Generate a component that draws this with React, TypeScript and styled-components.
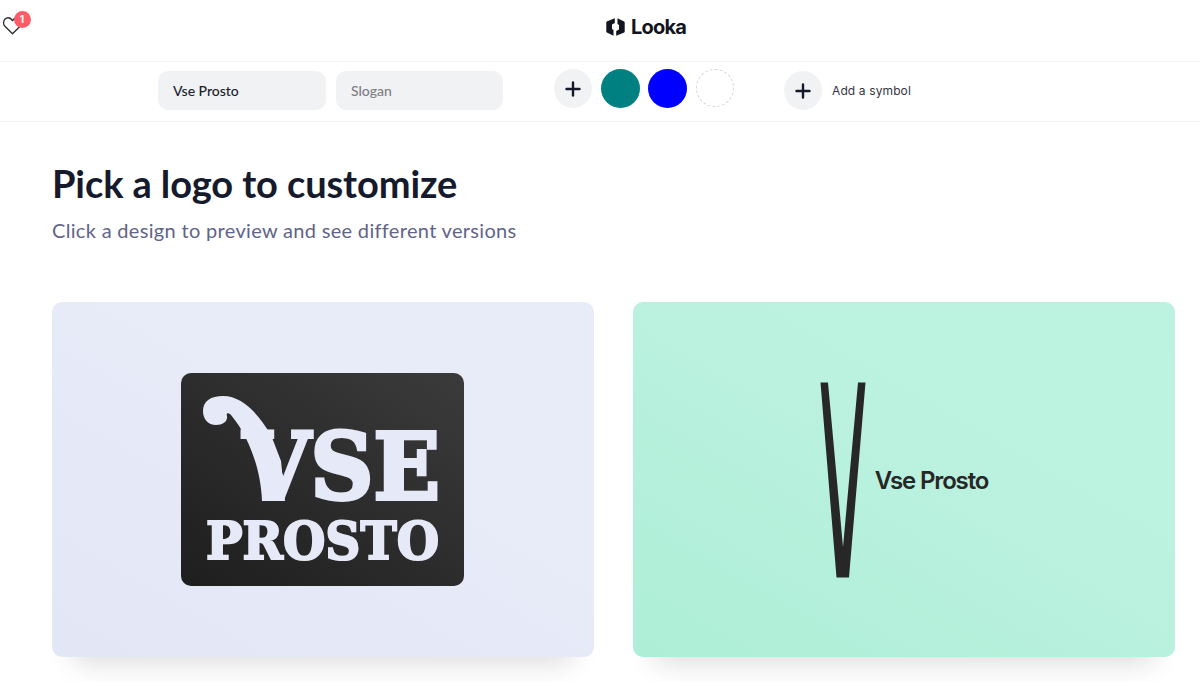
import React from "react";
import styled, { createGlobalStyle } from "styled-components";

const Global = createGlobalStyle`
  html, body { margin: 0; padding: 0; background: #fff; height: 682px; overflow: hidden; }
  * { box-sizing: border-box; }
`;

const Page = styled.div`
  width: 1200px;
  height: 682px;
  overflow: hidden;
  font-family: "Lato", "Liberation Sans", sans-serif;
  color: #151a2c;
`;

const Header = styled.header`
  height: 62px;
  display: flex;
  align-items: flex-start;
  border-bottom: 1px solid #f4f4f6;
  padding-left: 3px;
`;

const HeartWrap = styled.div`
  position: relative;
  width: 19px;
  height: 18px;
  margin-top: 17px;
  color: #2a2a30;
`;

const Badge = styled.span`
  position: absolute;
  left: 10.5px;
  top: -6.5px;
  width: 17px;
  height: 17px;
  border-radius: 50%;
  background: #ff5c67;
  color: #fff;
  font: 700 10px/17px "Inter", sans-serif;
  text-align: center;
`;

const Brand = styled.div`
  display: flex;
  align-items: center;
  gap: 6px;
  margin-left: 584px;
  margin-top: 16px;
  height: 22px;
`;

const BrandName = styled.span`
  font: 700 20px/22px "Inter", sans-serif;
  letter-spacing: -0.8px;
  color: #12141f;
`;

const Toolbar = styled.div`
  height: 60px;
  display: flex;
  align-items: flex-start;
  padding: 9px 0 0 158px;
  border-bottom: 1px solid #f4f4f6;
`;

const TextField = styled.input<{ $width: number }>`
  width: ${(p) => p.$width}px;
  height: 39px;
  border: 0;
  border-radius: 10px;
  background: #f1f2f4;
  padding: 0 15px;
  margin-right: 10px;
  font: 500 14px "Lato", sans-serif;
  color: #1b1e2e;
  outline: none;
  &::placeholder { color: #7c7e84; opacity: 1; }
`;

const Swatches = styled.div`
  display: flex;
  gap: 8.5px;
  margin: -2px 0 0 41px;
`;

const RoundButton = styled.button`
  width: 38px;
  height: 39px;
  border-radius: 50%;
  border: 0;
  padding: 0;
  background: #f1f2f4;
  display: flex;
  align-items: center;
  justify-content: center;
  color: #15182a;
`;

const Swatch = styled.div<{ $color: string }>`
  width: 39px;
  height: 39px;
  border-radius: 50%;
  background: ${(p) => p.$color};
`;

const EmptySwatch = styled.div`
  width: 38px;
  height: 38px;
  border-radius: 50%;
  border: 1px dashed #d4d4d6;
`;

const SymbolGroup = styled.div`
  display: flex;
  align-items: center;
  gap: 10px;
  margin-left: 50.5px;
`;

const SymbolLabel = styled.span`
  font: 400 12px "Inter", sans-serif;
  letter-spacing: 0.12px;
  color: #33353f;
`;

const Main = styled.main`
  padding: 38px 25px 0 52px;
`;

const Title = styled.h1`
  margin: 0;
  font: 700 38px/46px "Lato", sans-serif;
  letter-spacing: -0.1px;
  color: #151a2c;
`;

const Subtitle = styled.p`
  margin: 11px 0 0;
  font: 400 20px/26px "Lato", sans-serif;
  letter-spacing: 0.32px;
  color: #5f6488;
`;

const Cards = styled.div`
  display: grid;
  grid-template-columns: 542px 542px;
  column-gap: 39px;
  margin-top: 59px;
`;

const Card = styled.div<{ $from: string; $to: string }>`
  position: relative;
  height: 355px;
  border-radius: 10px;
  background: linear-gradient(30deg, ${(p) => p.$from}, ${(p) => p.$to} 65%);
  box-shadow: 0 28px 26px -22px rgba(0, 0, 0, 0.14);
  display: flex;
  align-items: center;
  justify-content: center;
`;

const DarkPlate = styled.div`
  width: 283px;
  height: 213px;
  margin-right: 1px;
  border-radius: 10px;
  background: linear-gradient(35deg, #1e1e1e, #3b3b3b);
`;

const LockupRow = styled.div`
  display: flex;
  align-items: center;
  gap: 9px;
`;

const LockupName = styled.span`
  font: 600 24px "Inter", sans-serif;
  letter-spacing: -1.15px;
  color: #272727;
  margin-top: 2px;
`;

const Heart = () => (
  <svg width="19" height="18" viewBox="0 0 19 18" fill="none" stroke="currentColor" strokeWidth="1.3" strokeLinejoin="round">
    <path d="M9.5 16.8 1.9 9.3C-.3 7.1.2 2.4 3.4 1.1 5.8.2 8.1 1.4 9.5 3.6 10.9 1.4 13.2.2 15.6 1.1 18.8 2.4 19.3 7.1 17.1 9.3L9.5 16.8Z" />
  </svg>
);

const LookaMark = () => (
  <svg width="19" height="18" viewBox="0 0 19 18" fill="#12141f">
    <path d="M8.8.2 1.4 3.2C.6 3.5.3 4 .3 4.8v8.4c0 .8.3 1.3 1.1 1.6l6.1 3V12L6 11V6.5L8.8 5V.2Z" />
    <path d="M10.2 17.8l7.4-3c.8-.3 1.1-.8 1.1-1.6V4.8c0-.8-.3-1.3-1.1-1.6l-6.1-3V6l1.5 1v4.5L10.2 13v4.8Z" />
  </svg>
);

const Plus = () => (
  <svg width="16" height="16" viewBox="0 0 16 16" stroke="currentColor" strokeWidth="2.4" strokeLinecap="round">
    <path d="M8 1.5v13M1.5 8h13" />
  </svg>
);

const PLATE_TEXT = "#e6eaf8";

const PlateArt = () => (
  <svg width="283" height="213" viewBox="0 0 283 213" fontFamily="'DejaVu Serif', serif" fontWeight="700" fill={PLATE_TEXT} stroke={PLATE_TEXT}>
    <text x="62" y="126" fontSize="92" strokeWidth="4" textLength="197" lengthAdjust="spacingAndGlyphs">VSE</text>
    <text x="25" y="186" fontSize="53" strokeWidth="2.2" textLength="233" lengthAdjust="spacingAndGlyphs">PROSTO</text>
    <path
      strokeWidth="0"
      d="M22 38C22 28 30 23 42 23 62 23 78 42 90 62L100 88 104 128H81C80 100 70 66 50 42 47 39 45 40 46 43 47 48 42 52 35 52 27 52 22 46 22 38Z"
    />
  </svg>
);

const VMark = () => (
  <svg width="46" height="196" viewBox="0 0 46 196" fill="#272727">
    <path d="M.5.5H8L23 165 38 .5h7.5L29 195.5H16.5L.5.5Z" />
  </svg>
);

export default function App() {
  return (
    <Page>
      <Global />
      <Header>
        <HeartWrap>
          <Heart />
          <Badge>1</Badge>
        </HeartWrap>
        <Brand>
          <LookaMark />
          <BrandName>Looka</BrandName>
        </Brand>
      </Header>
      <Toolbar>
        <TextField $width={168} defaultValue="Vse Prosto" />
        <TextField $width={167} placeholder="Slogan" />
        <Swatches>
          <RoundButton><Plus /></RoundButton>
          <Swatch $color="#008080" />
          <Swatch $color="#0000ff" />
          <EmptySwatch />
        </Swatches>
        <SymbolGroup>
          <RoundButton><Plus /></RoundButton>
          <SymbolLabel>Add a symbol</SymbolLabel>
        </SymbolGroup>
      </Toolbar>
      <Main>
        <Title>Pick a logo to customize</Title>
        <Subtitle>Click a design to preview and see different versions</Subtitle>
        <Cards>
          <Card $from="#e2e7f6" $to="#e8ebf8">
            <DarkPlate><PlateArt /></DarkPlate>
          </Card>
          <Card $from="#aeeed7" $to="#bcf2e0">
            <LockupRow>
              <VMark />
              <LockupName>Vse Prosto</LockupName>
            </LockupRow>
          </Card>
        </Cards>
      </Main>
    </Page>
  );
}
